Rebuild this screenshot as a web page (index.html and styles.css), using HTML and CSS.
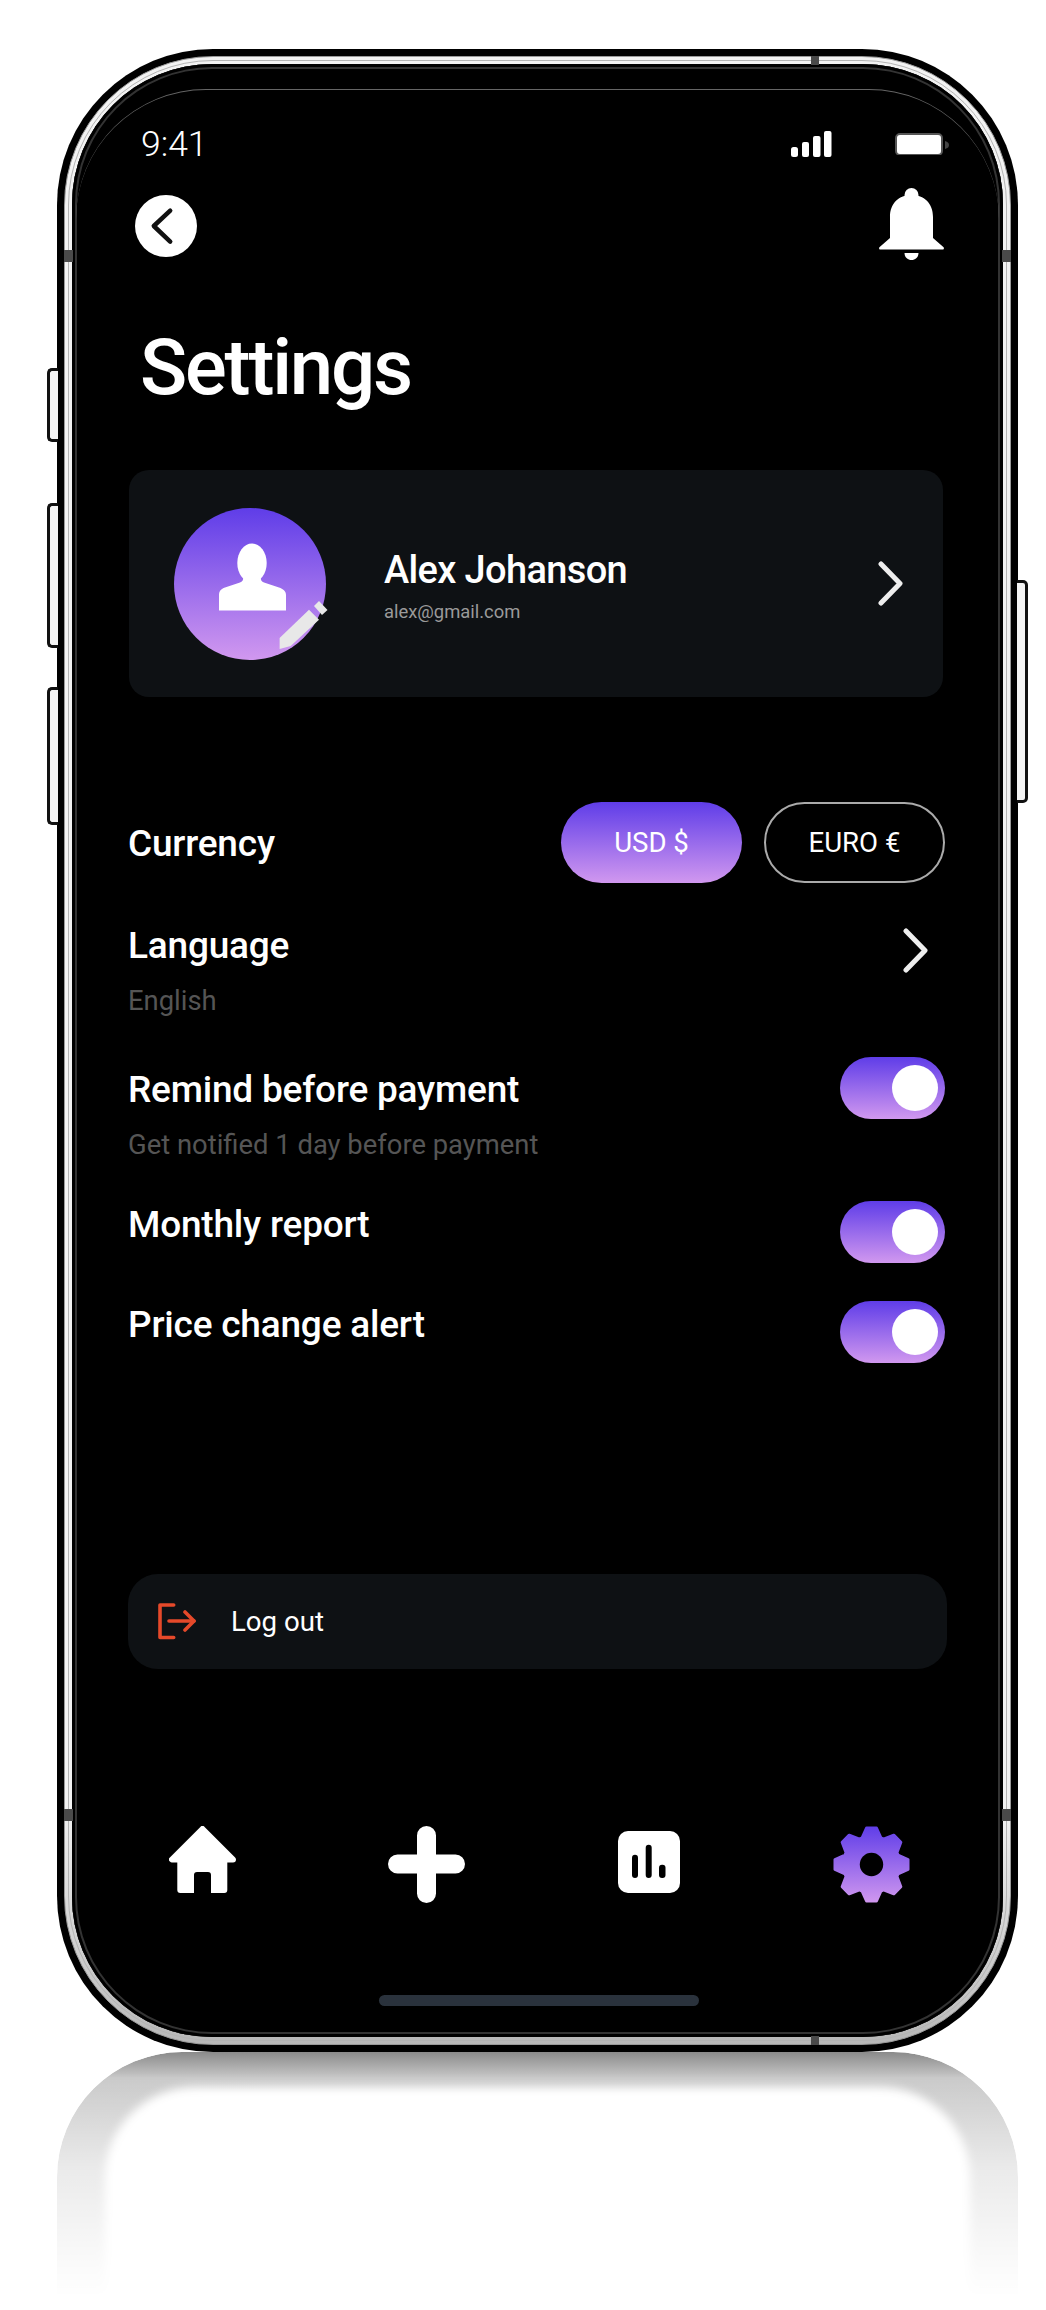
FILE: index.html
```html
<!DOCTYPE html>
<html lang="en">
  <head>
    <meta charset="UTF-8" />
    <meta name="viewport" content="width=device-width, initial-scale=1.0" />
    <title>Settings</title>
    <link rel="stylesheet" href="styles.css">
  </head>
  <body>
    <div class="phone">
      <span class="side-btn side-btn-mute"></span>
      <span class="side-btn side-btn-up"></span>
      <span class="side-btn side-btn-down"></span>
      <span class="side-btn side-btn-power"></span>

      <div class="band">
        <div class="rim">
          <div class="screen">
            <div class="status-bar">
              <span class="time">9:41</span>
              <div class="status-icons">
                <svg width="41" height="26" viewBox="0 0 41 26" fill="#fff">
                  <rect x="0" y="16" width="7" height="10" rx="2.5" />
                  <rect x="11" y="11" width="7" height="15" rx="2" />
                  <rect x="22" y="5" width="7.5" height="21" rx="2" />
                  <rect x="33" y="0" width="7.5" height="26" rx="2" />
                </svg>
                <svg width="56" height="24" viewBox="0 0 56 24">
                  <rect x="1" y="3" width="46" height="21" rx="4" fill="#fff" stroke="#555" stroke-width="2" />
                  <path d="M50 10c3 1 4 2 4 4s-1 3-4 4z" fill="#444" />
                </svg>
              </div>
            </div>

            <div class="top-bar">
              <button class="back-btn">
                <svg width="62" height="62" viewBox="0 0 62 62" fill="none" stroke="#111" stroke-width="4.5" stroke-linecap="round" stroke-linejoin="round">
                  <path d="M35.2 15.7 18.8 31l16.4 15.7" />
                </svg>
              </button>
              <svg class="bell" width="65" height="72" viewBox="0 0 65 72" fill="#fff">
                <circle cx="32.5" cy="7" r="7" />
                <path d="M1 61.500c-1 0-1.300-1.800-.3-2.600L11 50V29C11 15 20 7 32.500 7S54 15 54 29v21l10.300 8.900c1 .8.700 2.600-.3 2.600z" />
                <path d="M25.500 65h14c0 4-3 7-7 7s-7-3-7-7z" />
              </svg>
            </div>

            <h1 class="title">Settings</h1>

            <div class="profile-card">
              <div class="avatar">
                <svg width="152" height="152" viewBox="0 0 152 152">
                  <ellipse cx="78" cy="55" rx="14.700" ry="19.500" fill="#fff" />
                  <path d="M45 102.500V87c0-4 2-6 6-7.500l15-5c3-1 4-4 3-9h18c-1 5 0 8 3 9l15 5c4 1.500 7 3.500 7 7.500v15.500z" fill="#fff" />
                  <path d="M105.600 141v-11L135 101.700l10 10-28.300 26.300z" fill="#e8e8e8" />
                  <path d="M140 98l5-5 8.500 9-5.500 5z" fill="#e8e8e8" />
                </svg>
              </div>
              <div class="profile-info">
                <div class="profile-name">Alex Johanson</div>
                <div class="profile-email">alex@gmail.com</div>
              </div>
              <svg class="chevron" width="25" height="45" viewBox="0 0 25 45" fill="none" stroke="#eee" stroke-width="5" stroke-linecap="round" stroke-linejoin="round">
                <path d="M3 3l19 19.500L3 42" />
              </svg>
            </div>

            <div class="row row-currency">
              <div class="row-title">Currency</div>
              <div class="currency-btns">
                <button class="pill pill-active">USD $</button>
                <button class="pill">EURO €</button>
              </div>
            </div>

            <div class="row row-language">
              <div>
                <div class="row-title">Language</div>
                <div class="row-sub">English</div>
              </div>
              <svg class="language-chevron" width="25" height="45" viewBox="0 0 25 45" fill="none" stroke="#eee" stroke-width="5" stroke-linecap="round" stroke-linejoin="round">
                <path d="M3 3l19 19.500L3 42" />
              </svg>
            </div>

            <div class="row row-remind">
              <div class="row-text-low">
                <div class="row-title">Remind before payment</div>
                <div class="row-sub">Get notified 1 day before payment</div>
              </div>
              <div class="toggle"><span class="knob"></span></div>
            </div>

            <div class="row row-toggle">
              <div class="row-title">Monthly report</div>
              <div class="toggle"><span class="knob"></span></div>
            </div>

            <div class="row row-toggle">
              <div class="row-title">Price change alert</div>
              <div class="toggle"><span class="knob"></span></div>
            </div>

            <div class="logout">
              <svg width="38" height="37" viewBox="0 0 38 37" fill="none" stroke="#e5492a" stroke-width="3.6" stroke-linecap="round" stroke-linejoin="round">
                <path d="M15.700 2H2v32.500h13.700" />
                <path d="M11 18h25" />
                <path d="M27 9l9 9-9 9" />
              </svg>
              <span>Log out</span>
            </div>

            <nav class="bottom-nav">
              <svg width="67" height="67" viewBox="0 0 67 67" fill="#fff">
                <path d="M33.500 3 3 33.500h61z" stroke="#fff" stroke-width="6" stroke-linejoin="round" />
                <path d="M8.300 30h50v34a3 3 0 0 1-3 3H42V49a3 3 0 0 0-3-3H28a3 3 0 0 0-3 3v18H11.300a3 3 0 0 1-3-3z" />
              </svg>
              <svg class="nav-plus" width="77" height="77" viewBox="0 0 77 77" fill="none" stroke="#fff" stroke-width="19" stroke-linecap="round">
                <path d="M38.500 9.500v58M9.500 38h58" />
              </svg>
              <svg class="nav-chart" width="62" height="62" viewBox="0 0 62 62">
                <rect width="62" height="62" rx="10" fill="#fff" />
                <rect x="14" y="23.700" width="6" height="23.300" rx="3" fill="#000" />
                <rect x="27.700" y="13.700" width="6" height="33.300" rx="3" fill="#000" />
                <rect x="41" y="33.700" width="6.500" height="13.300" rx="3" fill="#000" />
              </svg>
              <svg width="77" height="77" viewBox="0 0 77 77">
                <defs>
                  <linearGradient id="gearFill" gradientUnits="userSpaceOnUse" x1="0" y1="0" x2="0" y2="77">
                    <stop offset="0" stop-color="#5f3de8" />
                    <stop offset="1" stop-color="#d198ef" />
                  </linearGradient>
                </defs>
                <path fill="url(#gearFill)" stroke="url(#gearFill)" stroke-width="3" stroke-linejoin="round" d="M29 12 33.500 2h10L48 12 50.520 13.040 60.770 9.160l7.070 7.070L63.960 26.480 65 29l10 4.500v10L65 48l-1.040 2.520 3.880 10.250-7.070 7.070L50.520 63.960 48 65l-4.500 10h-10L29 65l-2.520-1.040-10.250 3.880-7.070-7.070L13.040 50.520 12 48 2 43.500v-10L12 29l1.040-2.520L9.160 16.230l7.070-7.070L26.480 13.040z" />
                <circle cx="38.500" cy="38.500" r="11.700" fill="#000" />
              </svg>
            </nav>

            <div class="home-indicator"></div>
          </div>
        </div>
      </div>

      <span class="notch notch-top"></span>
      <span class="notch notch-bottom"></span>
      <span class="notch notch-left-a"></span>
      <span class="notch notch-left-b"></span>
      <span class="notch notch-right-a"></span>
      <span class="notch notch-right-b"></span>
    </div>

    <div class="reflection"><div class="reflection-hole"></div></div>
  </body>
</html>
```

FILE: styles.css
```css
* {
  box-sizing: border-box;
}
html,
body {
  margin: 0;
  background-color: #fff;
}
body {
  width: 1046px;
  height: 2310px;
  padding: 49px 28px 0 57px;
  overflow: hidden;
  font-family: Roboto, "Liberation Sans", sans-serif;
  color: #fff;
}
button {
  font-family: inherit;
  border: none;
  padding: 0;
  cursor: pointer;
}

/* phone body */
.phone {
  position: relative;
  width: 961px;
  height: 2003px;
  padding: 7px;
  background: #000;
  border-radius: 156px;
}
.band {
  position: relative;
  height: 100%;
  padding: 7px;
  border: 1px solid #999;
  border-radius: 149px;
  background: linear-gradient(#f2f2f2 88%, #b8b8b8);
}
.band::before {
  content: "";
  position: absolute;
  inset: 3px;
  border: 1px solid #b4b4b4;
  border-radius: 145px;
}
.rim {
  height: 100%;
  background: #000;
  border-radius: 140px;
  box-shadow: inset 0 0 0 3px #000, inset 0 0 0 5px #333;
}
.screen {
  position: relative;
  height: 100%;
  padding: 0 58px 0 57px;
}
.screen::before {
  content: "";
  position: absolute;
  left: 4px;
  right: 4px;
  top: 25px;
  height: 130px;
  border-top: 1px solid #666;
  border-radius: 130px 130px 0 0;
}
.side-btn {
  position: absolute;
  width: 11px;
  background: #f4f4f4;
  border: 3px solid #111;
  border-right: 0;
  border-radius: 5px 0 0 5px;
  left: -10px;
}
.side-btn-mute {
  top: 319px;
  height: 74px;
}
.side-btn-up {
  top: 454px;
  height: 145px;
}
.side-btn-down {
  top: 638px;
  height: 138px;
}
.side-btn-power {
  left: auto;
  right: -10px;
  top: 531px;
  height: 223px;
  border: 3px solid #111;
  border-left: 0;
  border-radius: 0 5px 5px 0;
}
.notch {
  position: absolute;
  background: #4a4a4a;
}
.notch-top,
.notch-bottom {
  left: 754px;
  width: 8px;
  height: 9px;
}
.notch-top {
  top: 7px;
}
.notch-bottom {
  bottom: 7px;
}
.notch-left-a,
.notch-left-b,
.notch-right-a,
.notch-right-b {
  width: 9px;
  height: 12px;
}
.notch-left-a,
.notch-right-a {
  top: 201px;
}
.notch-left-b,
.notch-right-b {
  top: 1760px;
}
.notch-left-a,
.notch-left-b {
  left: 7px;
}
.notch-right-a,
.notch-right-b {
  right: 7px;
}

/* status and header */
.status-bar {
  display: flex;
  justify-content: space-between;
  align-items: flex-start;
  box-sizing: content-box;
  height: 27px;
  padding: 67px 0 0 12px;
}
.time {
  font-size: 35.5px;
  font-weight: 300;
  line-height: 27px;
}
.status-icons {
  display: flex;
  align-items: flex-start;
  gap: 63px;
  margin-right: -6px;
}
.top-bar {
  display: flex;
  justify-content: space-between;
  align-items: flex-start;
  margin-top: 30px;
}
.back-btn {
  display: block;
  width: 62px;
  height: 62px;
  margin: 7px 0 0 6px;
  border-radius: 50%;
  background: #fff;
}
.back-btn svg {
  display: block;
}
.bell {
  margin-right: 1px;
}
.title {
  margin: 69px 0 0 11px;
  font-size: 78px;
  font-weight: 500;
  letter-spacing: -2.2px;
  line-height: 78px;
}

/* profile card */
.profile-card {
  display: flex;
  align-items: center;
  height: 227px;
  margin: 63px 2px 0 0;
  padding: 0 40px 0 45px;
  background: #0e1114;
  border-radius: 20px;
}
.avatar {
  width: 152px;
  height: 152px;
  border-radius: 50%;
  background: linear-gradient(#5f3de8, #d198ef);
  flex-shrink: 0;
}
.avatar svg {
  display: block;
  overflow: visible;
}
.profile-info {
  flex: 1;
  margin: 4px 0 0 58px;
}
.profile-name {
  font-size: 38px;
  font-weight: 500;
  letter-spacing: -0.65px;
  line-height: 44px;
}
.profile-email {
  margin-top: 8px;
  font-size: 18.4px;
  line-height: 24px;
  color: #9a9a9a;
}

/* settings rows */
.row {
  display: flex;
  justify-content: space-between;
  align-items: flex-start;
}
.row-title {
  margin-left: -1px;
  padding-top: 1px;
  font-size: 37px;
  font-weight: 500;
  letter-spacing: -0.2px;
  line-height: 44px;
}
.row-sub {
  margin: 16px 0 0 -1px;
  font-size: 27.4px;
  line-height: 34px;
  color: #555;
}
.row-currency {
  align-items: center;
  height: 81px;
  margin-top: 105px;
}
.row-currency .row-title {
  padding-top: 3px;
}
.currency-btns {
  display: flex;
  gap: 22px;
}
.pill {
  width: 181px;
  height: 81px;
  font-size: 27.6px;
  color: #fff;
  background: #000;
  border: 2px solid #aaa;
  border-radius: 41px;
}
.pill-active {
  border: none;
  background: linear-gradient(#5f3de8, #d198ef);
}
.row-language {
  margin-top: 40px;
}
.language-chevron {
  margin-top: 5px;
  margin-right: 17px;
}
.row-remind {
  margin-top: 39px;
  padding-bottom: 1px;
}
.row-text-low {
  padding-top: 10px;
}
.row-toggle {
  margin-top: 38px;
}
.row-toggle .row-title {
  margin-top: 1px;
}
.toggle {
  display: flex;
  align-items: center;
  justify-content: flex-end;
  width: 105px;
  height: 62px;
  padding-right: 7px;
  border-radius: 31px;
  background: linear-gradient(#5f3de8, #d198ef);
}
.knob {
  display: block;
  width: 46px;
  height: 46px;
  border-radius: 50%;
  background: #fff;
}

/* log out */
.logout {
  display: flex;
  align-items: center;
  gap: 35px;
  height: 95px;
  margin: 211px -2px 0 -1px;
  padding-left: 30px;
  background: #0e1114;
  border-radius: 30px;
  font-size: 27.6px;
}

/* bottom nav */
.bottom-nav {
  display: grid;
  grid-template-columns: repeat(4, 1fr);
  justify-items: center;
  align-items: start;
  height: 77px;
  margin: 157px -37.5px 0 -38.5px;
}
.nav-plus {
  margin-left: 2px;
}
.nav-chart {
  margin: 5px 0 0 1px;
}
.home-indicator {
  width: 320px;
  height: 11px;
  margin: 92px 0 0 250px;
  border-radius: 6px;
  background: #2a323c;
}

/* mirror under the phone */
.reflection {
  position: relative;
  width: 961px;
  height: 258px;
  background: linear-gradient(#8a8a8a, #c8c8c8 26px, #d0d0d0);
  border-radius: 125px 125px 0 0;
  overflow: hidden;
  -webkit-mask-image: linear-gradient(#000 8%, rgba(0, 0, 0, 0.4) 45%, transparent 95%);
  mask-image: linear-gradient(#000 8%, rgba(0, 0, 0, 0.4) 45%, transparent 95%);
}
.reflection-hole {
  position: absolute;
  inset: 35px 48px -40px;
  background: #fff;
  border-radius: 90px 90px 0 0;
  filter: blur(5px);
}
```
